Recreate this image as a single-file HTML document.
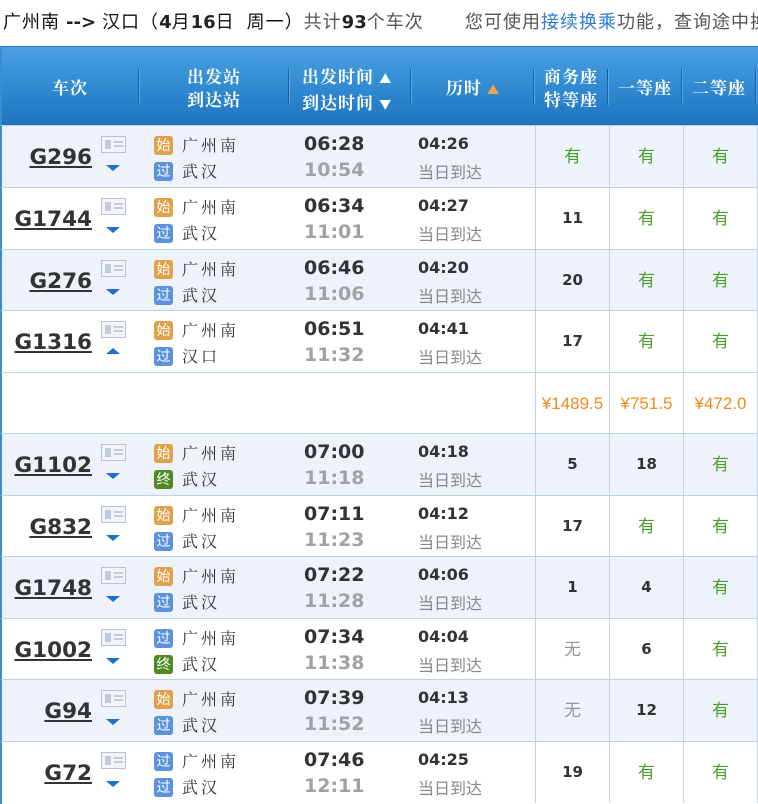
<!DOCTYPE html>
<html><head><meta charset="utf-8">
<style>
*{margin:0;padding:0;box-sizing:border-box}
body{width:758px;height:803px;overflow:hidden;background:#fff;font-family:"Liberation Sans","Noto Sans CJK SC",sans-serif;position:relative}
.top{position:absolute;left:3px;top:8px;font-size:18px;letter-spacing:1px;color:#333;white-space:nowrap}
.top b{font-family:"DejaVu Sans",sans-serif;font-weight:bold;color:#222;letter-spacing:0}
.hdr{position:absolute;left:0;top:46px;width:758px;height:80px;background:linear-gradient(#4aa0e0,#2d86cf 60%,#1f73bd);border-top:1px solid #2a7cc4;border-left:2px solid #3b8dd0}
.hdr .c{position:absolute;color:#fff;font-weight:bold;font-size:17px;line-height:23px;text-align:center;font-family:"Noto Serif CJK SC","Noto Sans CJK SC",serif;letter-spacing:1px}
.sep{position:absolute;top:22px;width:1px;height:36px;background:#1a5f9e;box-shadow:1px 0 0 #5aa8e4}
.row{position:absolute;left:0;width:758px;height:63px;border-left:2px solid #3b8dd0;border-top:1.5px solid #bcd3e3}
.l{background:#eef2fa}
.w{background:#fff}
.tn{position:absolute;right:666px;top:19px;font-family:"DejaVu Sans",sans-serif;font-weight:bold;font-size:21.5px;color:#333;text-decoration:underline;text-underline-offset:2px}
.card{position:absolute;left:99px;top:10px;width:25px;height:17px;border:1px solid #b7c3d3;background:#f1f4f8}
.card:before{content:"";position:absolute;left:3px;top:3px;width:6px;height:9px;background:#c3cbd6}
.card:after{content:"";position:absolute;left:12px;top:4px;width:9px;height:2px;background:#c3cbd6;box-shadow:0 4px 0 #c3cbd6}
.dn{position:absolute;left:104px;top:39px;width:0;height:0;border-left:7px solid transparent;border-right:7px solid transparent;border-top:6px solid #1d6fd0}
.up{position:absolute;left:104px;top:37px;width:0;height:0;border-left:7px solid transparent;border-right:7px solid transparent;border-bottom:6px solid #1d6fd0}
.bd{position:absolute;left:152px;width:19px;height:19px;border-radius:3px;color:#fff;font-size:14px;line-height:19px;text-align:center}
.o{background:#e1a04a}.b{background:#5c92dc}.g{background:#4f8a23}
.st{position:absolute;left:180px;font-size:16px;color:#333;letter-spacing:3px;line-height:20px;font-family:"Noto Serif CJK SC","Noto Sans CJK SC",serif}
.t1,.t2{position:absolute;left:302px;font-family:"DejaVu Sans",sans-serif;font-weight:bold;font-size:19px;line-height:22px}
.t1{top:7px;color:#333}.t2{top:33px;color:#a2a2a2}
.d1{position:absolute;left:416px;top:8px;font-family:"DejaVu Sans",sans-serif;font-weight:bold;font-size:16px;color:#333}
.d2{position:absolute;left:416px;top:33px;font-size:16px;color:#888}
.s{position:absolute;top:0;height:61px;width:74px;border-left:1.5px solid #bcd3e3;text-align:center;line-height:61px;font-size:17px}
.y{color:#4aa02c}.n{color:#999}.k{font-family:"DejaVu Sans",sans-serif;font-weight:bold;color:#333;font-size:15px}
.p{color:#f08a1a;font-size:17px}
</style></head><body>
<div class="top"><span style="color:#111">广州南</span> <b>--&gt;</b> <span style="color:#111">汉口（<b>4</b>月<b>16</b>日&nbsp; 周一）</span><span style="color:#555">共计</span><b>93</b><span style="color:#555">个车次</span></div>
<div class="top" style="left:465px;color:#555">您可使用<span style="color:#2a7ad6">接续换乘</span>功能，查询途中换乘</div>
<div class="hdr">
<div class="c" style="left:0;width:136px;top:28px">车次</div>
<div class="sep" style="left:136px"></div>
<div class="c" style="left:137px;width:150px;top:17px">出发站<br>到达站</div>
<div class="sep" style="left:286px"></div>
<div class="c" style="left:290px;width:118px;top:17px;text-align:left;padding-left:10px">出发时间 <span style="font-size:12px">▲</span><br>到达时间 <span style="font-size:12px">▼</span></div>
<div class="sep" style="left:408px"></div>
<div class="c" style="left:409px;width:124px;top:28px">历时 <span style="color:#f0a050;font-size:12px">▲</span></div>
<div class="sep" style="left:531px"></div>
<div class="c" style="left:532px;width:74px;top:17px">商务座<br>特等座</div>
<div class="sep" style="left:605px"></div>
<div class="c" style="left:606px;width:74px;top:28px">一等座</div>
<div class="sep" style="left:679px"></div>
<div class="c" style="left:680px;width:74px;top:28px">二等座</div>
<div class="sep" style="left:753px"></div>
</div>

<div class="row l" style="top:125px"><div class="tn">G296</div><div class="card"></div><div class="dn"></div><div class="bd o" style="top:10px">始</div><div class="st" style="top:9px">广州南</div><div class="bd b" style="top:36px">过</div><div class="st" style="top:35px">武汉</div><div class="t1">06:28</div><div class="t2">10:54</div><div class="d1">04:26</div><div class="d2">当日到达</div><div class="s y" style="left:533px">有</div><div class="s y" style="left:607px">有</div><div class="s y" style="left:681px">有</div><div class="s" style="left:755px"></div></div>

<div class="row w" style="top:187px"><div class="tn">G1744</div><div class="card"></div><div class="dn"></div><div class="bd o" style="top:10px">始</div><div class="st" style="top:9px">广州南</div><div class="bd b" style="top:36px">过</div><div class="st" style="top:35px">武汉</div><div class="t1">06:34</div><div class="t2">11:01</div><div class="d1">04:27</div><div class="d2">当日到达</div><div class="s k" style="left:533px">11</div><div class="s y" style="left:607px">有</div><div class="s y" style="left:681px">有</div><div class="s" style="left:755px"></div></div>

<div class="row l" style="top:249px"><div class="tn">G276</div><div class="card"></div><div class="dn"></div><div class="bd o" style="top:10px">始</div><div class="st" style="top:9px">广州南</div><div class="bd b" style="top:36px">过</div><div class="st" style="top:35px">武汉</div><div class="t1">06:46</div><div class="t2">11:06</div><div class="d1">04:20</div><div class="d2">当日到达</div><div class="s k" style="left:533px">20</div><div class="s y" style="left:607px">有</div><div class="s y" style="left:681px">有</div><div class="s" style="left:755px"></div></div>

<div class="row w" style="top:310px"><div class="tn">G1316</div><div class="card"></div><div class="up"></div><div class="bd o" style="top:10px">始</div><div class="st" style="top:9px">广州南</div><div class="bd b" style="top:36px">过</div><div class="st" style="top:35px">汉口</div><div class="t1">06:51</div><div class="t2">11:32</div><div class="d1">04:41</div><div class="d2">当日到达</div><div class="s k" style="left:533px">17</div><div class="s y" style="left:607px">有</div><div class="s y" style="left:681px">有</div><div class="s" style="left:755px"></div></div>

<div class="row w" style="top:372px"><div class="s p" style="left:533px">¥1489.5</div><div class="s p" style="left:607px">¥751.5</div><div class="s p" style="left:681px">¥472.0</div><div class="s" style="left:755px"></div></div>

<div class="row l" style="top:433px"><div class="tn">G1102</div><div class="card"></div><div class="dn"></div><div class="bd o" style="top:10px">始</div><div class="st" style="top:9px">广州南</div><div class="bd g" style="top:36px">终</div><div class="st" style="top:35px">武汉</div><div class="t1">07:00</div><div class="t2">11:18</div><div class="d1">04:18</div><div class="d2">当日到达</div><div class="s k" style="left:533px">5</div><div class="s k" style="left:607px">18</div><div class="s y" style="left:681px">有</div><div class="s" style="left:755px"></div></div>

<div class="row w" style="top:495px"><div class="tn">G832</div><div class="card"></div><div class="dn"></div><div class="bd o" style="top:10px">始</div><div class="st" style="top:9px">广州南</div><div class="bd b" style="top:36px">过</div><div class="st" style="top:35px">武汉</div><div class="t1">07:11</div><div class="t2">11:23</div><div class="d1">04:12</div><div class="d2">当日到达</div><div class="s k" style="left:533px">17</div><div class="s y" style="left:607px">有</div><div class="s y" style="left:681px">有</div><div class="s" style="left:755px"></div></div>

<div class="row l" style="top:556px"><div class="tn">G1748</div><div class="card"></div><div class="dn"></div><div class="bd o" style="top:10px">始</div><div class="st" style="top:9px">广州南</div><div class="bd b" style="top:36px">过</div><div class="st" style="top:35px">武汉</div><div class="t1">07:22</div><div class="t2">11:28</div><div class="d1">04:06</div><div class="d2">当日到达</div><div class="s k" style="left:533px">1</div><div class="s k" style="left:607px">4</div><div class="s y" style="left:681px">有</div><div class="s" style="left:755px"></div></div>

<div class="row w" style="top:618px"><div class="tn">G1002</div><div class="card"></div><div class="dn"></div><div class="bd b" style="top:10px">过</div><div class="st" style="top:9px">广州南</div><div class="bd g" style="top:36px">终</div><div class="st" style="top:35px">武汉</div><div class="t1">07:34</div><div class="t2">11:38</div><div class="d1">04:04</div><div class="d2">当日到达</div><div class="s n" style="left:533px">无</div><div class="s k" style="left:607px">6</div><div class="s y" style="left:681px">有</div><div class="s" style="left:755px"></div></div>

<div class="row l" style="top:679px"><div class="tn">G94</div><div class="card"></div><div class="dn"></div><div class="bd o" style="top:10px">始</div><div class="st" style="top:9px">广州南</div><div class="bd b" style="top:36px">过</div><div class="st" style="top:35px">武汉</div><div class="t1">07:39</div><div class="t2">11:52</div><div class="d1">04:13</div><div class="d2">当日到达</div><div class="s n" style="left:533px">无</div><div class="s k" style="left:607px">12</div><div class="s y" style="left:681px">有</div><div class="s" style="left:755px"></div></div>

<div class="row w" style="top:741px"><div class="tn">G72</div><div class="card"></div><div class="dn"></div><div class="bd b" style="top:10px">过</div><div class="st" style="top:9px">广州南</div><div class="bd b" style="top:36px">过</div><div class="st" style="top:35px">武汉</div><div class="t1">07:46</div><div class="t2">12:11</div><div class="d1">04:25</div><div class="d2">当日到达</div><div class="s k" style="left:533px">19</div><div class="s y" style="left:607px">有</div><div class="s y" style="left:681px">有</div><div class="s" style="left:755px"></div></div>
</body></html>
